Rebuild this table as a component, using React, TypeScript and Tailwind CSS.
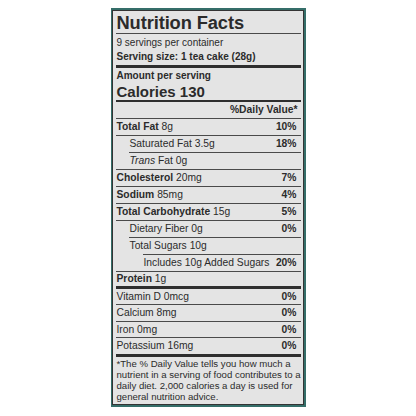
import React from 'react';

type Row = {
  name: string;
  amount?: string;
  dv?: string;
  bold?: boolean;
  italic?: string;
  indent?: 0 | 1 | 2;
  cut?: boolean; // rule above is indented
};

const rows: Row[] = [
  { name: 'Total Fat', amount: '8g', dv: '10%', bold: true },
  { name: 'Saturated Fat', amount: '3.5g', dv: '18%', indent: 1 },
  { name: 'Fat', italic: 'Trans', amount: '0g', indent: 1, cut: true },
  { name: 'Cholesterol', amount: '20mg', dv: '7%', bold: true },
  { name: 'Sodium', amount: '85mg', dv: '4%', bold: true },
  { name: 'Total Carbohydrate', amount: '15g', dv: '5%', bold: true },
  { name: 'Dietary Fiber', amount: '0g', dv: '0%', indent: 1 },
  { name: 'Total Sugars', amount: '10g', indent: 1, cut: true },
  { name: 'Includes 10g Added Sugars', dv: '20%', indent: 2, cut: true },
];

const minerals = [
  { name: 'Vitamin D 0mcg', dv: '0%' },
  { name: 'Calcium 8mg', dv: '0%' },
  { name: 'Iron 0mg', dv: '0%' },
  { name: 'Potassium 16mg', dv: '0%' },
];

function NutrientRow({ row }: { row: Row }) {
  const indent = row.indent ?? 0;
  // indented rules start under the text, full rules span the whole column
  const shift = row.cut ? (indent === 2 ? 'ml-[27px]' : 'ml-[13px]') : '';
  const pad = row.cut ? 'pl-[1px]' : indent === 2 ? 'pl-[28px]' : indent === 1 ? 'pl-[14px]' : 'pl-[1px]';
  return (
    <div className={`flex h-[17px] items-center justify-between border-t border-[#4a4a4a] pr-[4px] ${shift} ${pad}`}>
      <span className="whitespace-nowrap">
        {row.italic && <i>{row.italic} </i>}
        {row.bold ? <b>{row.name}</b> : row.name}
        {row.amount && <> {row.amount}</>}
      </span>
      {row.dv && <b>{row.dv}</b>}
    </div>
  );
}

export default function App() {
  return (
    <div className="flex h-[416px] w-[416px] justify-center bg-white pt-[8px] text-[#2b2b2b] font-['Liberation_Sans',Arial,sans-serif]">
      <div className="h-[399px] w-[195px] bg-[#356e69] px-[1.5px] pt-[2px]">
        <div className="h-[394.5px] border-[1.5px] border-[#343434] bg-[#e4e4e4] px-[2.5px]">
          <div className="mt-[2px] border-b border-[#4a4a4a] pl-[1px] text-[18.3px] leading-[20px] font-bold tracking-[-0.1px]">
            Nutrition Facts
          </div>
          <div className="mt-[3px] pl-[1px] text-[10px] leading-[12px]">9 servings per container</div>
          <div className="mt-[1.5px] pl-[1px] text-[10px] leading-[12px] font-bold">Serving size: 1 tea cake (28g)</div>
          <div className="mt-[2.5px] h-[3px] bg-[#2e2e2e]" />
          <div className="mt-[2px] pl-[1px] text-[10px] leading-[12px] font-bold">Amount per serving</div>
          <div className="mt-[1.5px] border-b-2 border-[#2e2e2e] pl-[1px] text-[15px] leading-[16px] font-bold">
            Calories 130
          </div>
          <div className="flex h-[16px] items-center justify-end pr-[3px] text-[10.3px] font-bold">%Daily Value*</div>
          <div className="text-[10.3px]">
            {rows.map((r) => (
              <NutrientRow key={r.name} row={r} />
            ))}
            <div className="flex h-[15.5px] items-center border-t border-[#4a4a4a] pl-[1px]">
              <b>Protein</b>&nbsp;1g
            </div>
            <div className="h-[3px] bg-[#2e2e2e]" />
            {minerals.map((m, i) => (
              <div
                key={m.name}
                className={`flex items-center justify-between pr-[4px] pl-[1px] ${i === 0 ? 'h-[15px]' : 'h-[16.5px] border-t border-[#4a4a4a]'}`}
              >
                <span>{m.name}</span>
                <b>{m.dv}</b>
              </div>
            ))}
            <div className="h-[3px] bg-[#2e2e2e]" />
          </div>
          <div className="pt-[1px] pl-[1px] text-[9.6px] leading-[11px] whitespace-nowrap">
            *The % Daily Value tells you how much a<br />
            nutrient in a serving of food contributes to a<br />
            daily diet. 2,000 calories a day is used for<br />
            general nutrition advice.
          </div>
        </div>
      </div>
    </div>
  );
}
